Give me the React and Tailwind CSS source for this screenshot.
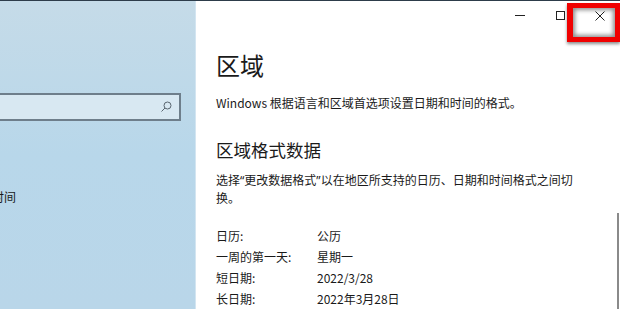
export default function App() {
  const font = { fontFamily: '"Noto Sans CJK SC", "Noto Sans", sans-serif' };
  return (
    <div className="w-[620px] h-[309px] overflow-hidden flex flex-col relative bg-white text-[#1a1a1a]" style={font}>
      <div className="h-px bg-[#2d3c4a] shrink-0" />
      <div className="flex flex-1 min-h-0">
        {/* Left panel */}
        <div className="w-[195px] shrink-0 bg-gradient-to-b from-[#c5dbe8] via-[#b8d7ea] to-[#b9d6e9] flex flex-col overflow-hidden">
          <div className="mt-[92px] -ml-[10px] w-[191px] h-[28px] border-2 border-[#6e7e8b] bg-[#d8e8f2] flex items-center justify-end pr-[7px]">
            <svg width="12" height="12" viewBox="0 0 12 12" fill="none" stroke="#5a6670" strokeWidth="1">
              <circle cx="7.5" cy="4.5" r="3.5" />
              <path d="M5 7 L1.5 10.5" />
            </svg>
          </div>
          <div className="mt-[68px] -ml-[8px] text-[12px] leading-[16px] whitespace-nowrap">时间</div>
        </div>
        <div className="w-px shrink-0 bg-[#d3e5f1]" />
        {/* Right panel */}
        <div className="flex-1 flex flex-col bg-white">
          <div className="flex justify-end h-[29px] shrink-0">
            <div className="w-[40px] flex items-center justify-center">
              <div className="w-[10px] h-px bg-[#222]" />
            </div>
            <div className="w-[40px] flex items-center justify-center">
              <div className="w-[9px] h-[9px] border border-[#222]" />
            </div>
            <div className="w-[40px] flex items-center justify-center">
              <svg width="10" height="10" viewBox="0 0 10 10" stroke="#222" strokeWidth="1">
                <path d="M0.5 0.5 L9.5 9.5 M9.5 0.5 L0.5 9.5" />
              </svg>
            </div>
          </div>
          <div className="pl-[20px] flex flex-col">
            <div className="mt-[19px] text-[24px] leading-[32px]">区域</div>
            <div className="mt-[14px] text-[12px] leading-[16px]">Windows 根据语言和区域首选项设置日期和时间的格式。</div>
            <div className="mt-[26px] text-[17.5px] leading-[26px]">区域格式数据</div>
            <div className="mt-[8px] text-[12px] leading-[17px]">
              选择<span style={{ fontFamily: '"Noto Sans", sans-serif' }}>“</span>更改数据格式<span style={{ fontFamily: '"Noto Sans", sans-serif' }}>”</span>以在地区所支持的日历、日期和时间格式之间切
              <br />
              换。
            </div>
            <div className="mt-[19px] flex flex-col text-[12px] leading-[21px]">
              <div className="flex"><span className="w-[101px]">日历:</span><span>公历</span></div>
              <div className="flex"><span className="w-[101px]">一周的第一天:</span><span>星期一</span></div>
              <div className="flex"><span className="w-[101px]">短日期:</span><span>2022/3/28</span></div>
              <div className="flex"><span className="w-[101px]">长日期:</span><span>2022年3月28日</span></div>
            </div>
          </div>
        </div>
      </div>
      {/* scrollbar indicator */}
      <div className="absolute left-[617px] top-[213px] w-[2px] h-[96px] bg-[#8a8a8a]" />
      {/* red highlight box */}
      <div className="absolute left-[567px] top-[3px] w-[53px] h-[39px] border-[5px] border-l-[6px] border-[#f00000] shadow-[inset_0_0_4px_2px_rgba(0,0,0,0.45),0_2px_3px_rgba(0,0,0,0.45)]" />
    </div>
  );
}
